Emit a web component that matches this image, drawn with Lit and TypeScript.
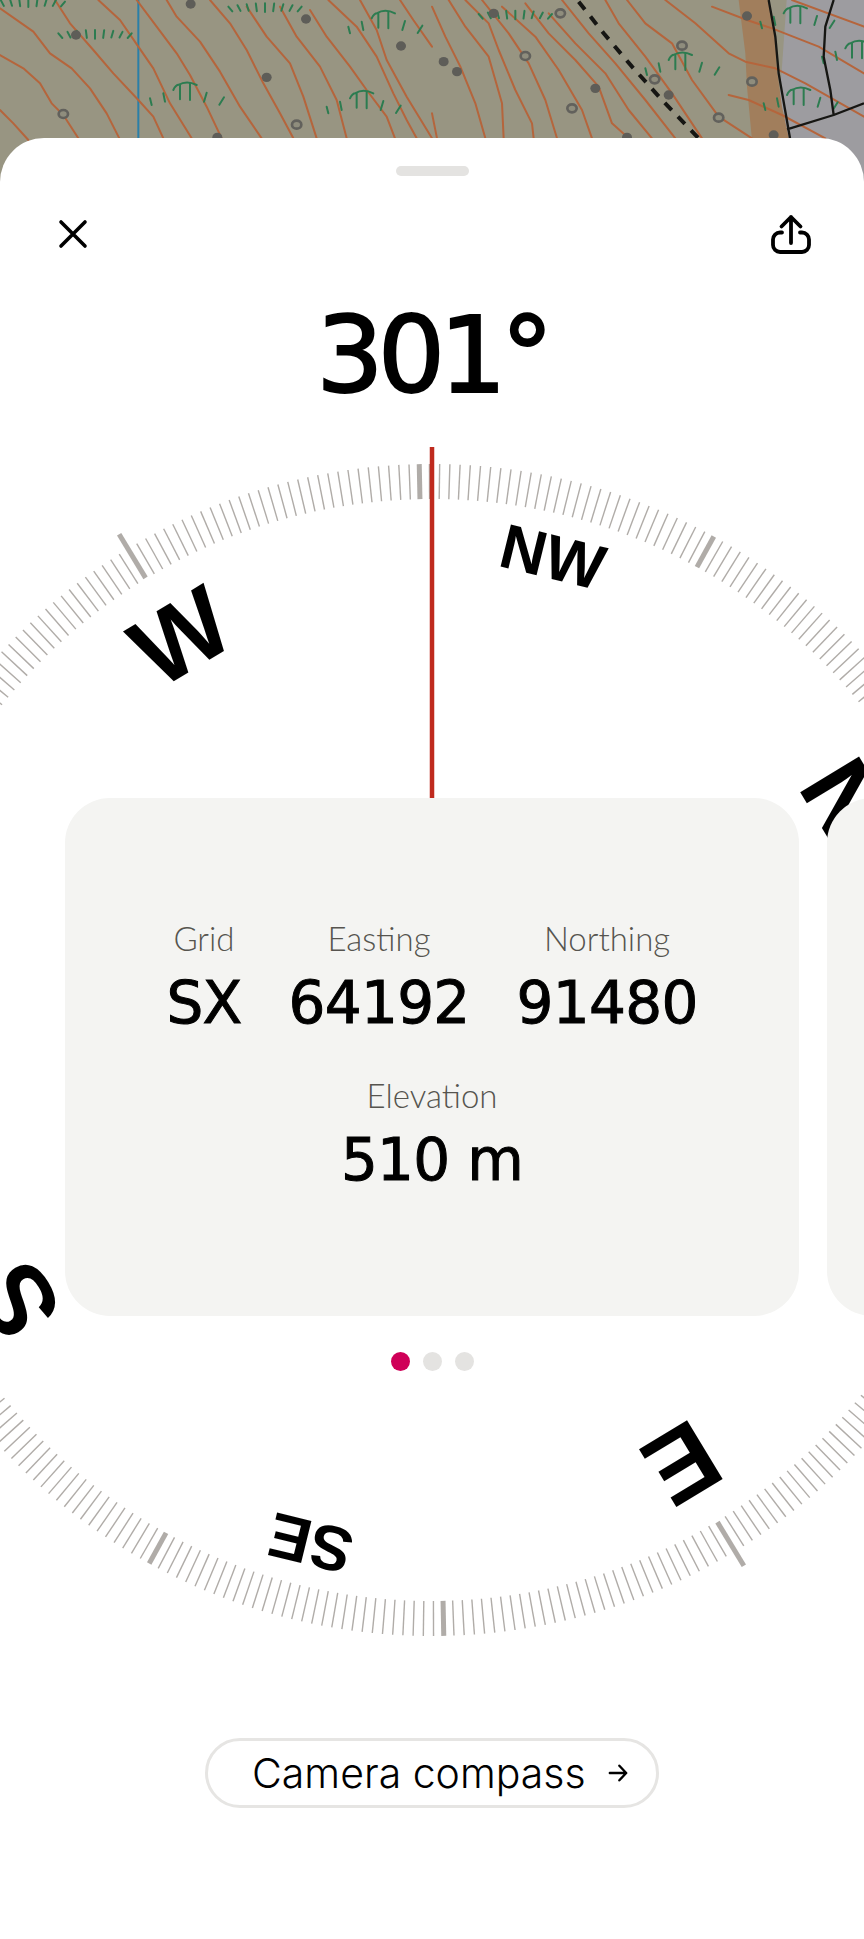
import { LitElement, html, css, svg } from 'lit';
import { customElement } from 'lit/decorators.js';

const HEADING = 301.2;
const CX = 431.5;
const CY = 912; // dial centre, relative to the sheet

// map drawn in 3x coordinates of the 864 wide strip, right half offset by 1296
const CONTOURS_LEFT = [
  '0,25 100,95 150,160 215,205 270,265 320,340 358,415',
  '0,165 70,205 120,250 155,310 190,345 235,415',
  '0,330 40,370 85,420',
  '165,0 210,70 280,150 340,220 415,300 460,350 490,415',
  '295,0 360,60 415,140 460,205 510,310 575,415',
  '410,0 470,80 530,160 570,225 620,320 665,415',
  '500,0 530,50 600,125 660,215 720,320 785,415',
  '630,0 690,70 740,150 790,250 840,340 880,415',
  '740,20 800,110 870,190 910,290 950,415',
  '840,20 890,110 960,200 1010,300 1040,415',
  '930,30 980,110 1050,200 1100,270 1160,350 1185,415',
  '985,0 1070,80 1130,170 1180,280 1220,360 1250,415',
  '1080,0 1130,90 1160,180 1220,290 1296,415',
  '1200,0 1240,60 1296,140',
];
const CONTOURS_RIGHT = [
  '0,340 15,415',
  '0,20 40,110 85,200 130,310 160,415',
  '50,0 100,80 170,170 210,310 215,415',
  '100,0 170,70 200,150 250,270 300,370 305,415',
  '150,0 230,100 290,190 340,300 375,415',
  '210,20 310,110 380,210 450,330 480,415',
  '280,10 350,100 430,180 500,260 540,370 590,415',
  '350,40 430,130 520,220 590,330 660,415',
  '390,0 470,100 550,190 640,300 730,415',
  '520,0 560,70 640,170 720,280 810,415',
  '585,0 640,70 720,130 780,240 860,350 960,415',
  '700,0 790,70 890,160 940,185 1030,205 1120,250 1296,350',
  '840,20 945,60 1020,85 1160,140 1296,220',
  '890,285 950,300 1050,345 1180,415',
  '1080,0 1296,80',
];
const MARKS = [[570, 275], [1100, 300], [1165, 60], [1296 + 760, 185], [1296 + 1105, 45], [1296 + 1115, 290], [1296 + 1290, 150]];
const FANS = [[285, 90], [795, 10], [85, -5], [1296 + 250, 32]];
const DOTS = [[228, 105], [572, 12], [918, 57], [1203, 138], [800, 232], [652, 412], [1296 + 35, 185], [1296 + 75, 215], [1296 + 185, 40], [1296 + 490, 265], [1296 + 710, 285], [1296 + 945, 48], [1296 + 1025, 405], [1296 + 585, 412]];
const RINGS = [[190, 342], [890, 374], [1296 + 280, 168], [1296 + 385, 40], [1296 + 420, 325], [1296 + 668, 238], [1296 + 750, 137], [1296 + 860, 353], [1296 + 960, 245]];

const LABELS: [string, number, boolean][] = [
  ['N', 0, true], ['NE', 45, false], ['E', 90, true], ['SE', 135, false],
  ['S', 180, true], ['SW', 225, false], ['W', 270, true], ['NW', 315, false],
];

function mark(x: number, y: number) {
  return svg`<g transform="translate(${x - 570} ${y - 275})" class="green">
    <path d="M570 250V300M535 255Q560 240 590 255M520 270Q528 252 540 255V298" />
    <path d="M450 295L455 315M490 280L495 305M620 278L612 305M672 292L658 314" />
  </g>`;
}

function fan(x: number, y: number) {
  const ticks = [];
  for (let i = -4; i <= 4; i++) {
    const top = y + ((i * i) / 16) * 10;
    ticks.push(svg`<line x1=${x + i * 26 + i * 1.5} y1=${top} x2=${x + i * 26 - i * 1.5} y2=${top + 26 - Math.abs(i) * 3} />`);
  }
  return svg`<g class="green">${ticks}</g>`;
}

function tick(deg: number) {
  const a = ((deg - HEADING) * Math.PI) / 180;
  const cardinal = deg % 90 === 0;
  const major = deg % 30 === 0;
  const r1 = major && cardinal ? 552 : 551;
  const r2 = cardinal ? 603 : 586;
  const s = Math.sin(a);
  const c = Math.cos(a);
  return svg`<line class=${major ? 'tick major' : 'tick'}
    x1=${CX + r1 * s} y1=${CY - r1 * c} x2=${CX + r2 * s} y2=${CY - r2 * c} />`;
}

@customElement('app-root')
export class AppRoot extends LitElement {
  static styles = css`
    :host {
      display: block;
      position: relative;
      width: 864px;
      height: 1939px;
      overflow: hidden;
      background: #fff;
      font-family: Lato, 'Liberation Sans', sans-serif;
      color: #000;
    }

    .map {
      position: absolute;
      top: 0;
      left: 0;
      width: 864px;
      height: 190px;
      filter: blur(0.5px);
    }
    .map .contour { fill: none; stroke: #b5653c; stroke-width: 6; stroke-linejoin: round; stroke-linecap: round; }
    .map .green { fill: none; stroke: #2c7c50; stroke-width: 6; stroke-linecap: round; }
    .map .dot { fill: #5e5d58; }
    .map .ring { fill: #8f8d7d; stroke: #62615c; stroke-width: 8; }
    .map .border { fill: none; stroke: #161613; stroke-width: 7; stroke-linejoin: round; }

    .sheet {
      position: absolute;
      top: 138px;
      left: 0;
      right: 0;
      bottom: 0;
      background: #fff;
      border-radius: 44px 44px 0 0;
      overflow: hidden;
    }

    .dial {
      position: absolute;
      top: 0;
      left: 0;
      width: 864px;
      height: 1801px;
    }
    .tick { stroke: #b0aca8; stroke-width: 1.4; }
    .tick.major { stroke-width: 5; }
    .needle { stroke: #bf2a1e; stroke-width: 4.5; }
    .dial text {
      font-family: 'Liberation Sans', Arial, sans-serif;
      font-weight: 700;
      text-anchor: middle;
      fill: #000;
    }

    .content {
      position: relative;
      display: flex;
      flex-direction: column;
      align-items: stretch;
    }

    .handle {
      align-self: center;
      width: 73px;
      height: 10px;
      margin-top: 28px;
      border-radius: 5px;
      background: #e4e3e1;
    }

    .header {
      display: flex;
      justify-content: space-between;
      align-items: center;
      height: 40px;
      margin-top: 38px;
      padding: 0 52px 0 58px;
    }
    .header svg { display: block; fill: none; stroke: #000; stroke-linecap: round; stroke-linejoin: round; }

    .bearing {
      height: 126px;
      margin-top: 39px;
      text-align: center;
      font-family: 'DejaVu Sans', sans-serif;
      font-size: 106px;
      line-height: 126px;
      letter-spacing: -6px;
      -webkit-text-stroke: 2px #000;
    }

    .cards {
      display: flex;
      gap: 28px;
      margin-top: 379px;
      padding-left: 65px;
    }
    .card {
      flex: none;
      display: flex;
      flex-direction: column;
      align-items: center;
      justify-content: center;
      gap: 37px;
      width: 734px;
      height: 518px;
      box-sizing: border-box;
      border-radius: 45px;
      background: #f4f4f2;
    }
    .row { display: flex; gap: 47px; }
    .field { display: flex; flex-direction: column; align-items: center; gap: 10px; }
    .field .label { font-size: 33px; font-weight: 300; line-height: 38px; color: #56544f; }
    .field .value {
      font-family: 'DejaVu Sans', sans-serif;
      font-size: 58px;
      line-height: 72px;
      letter-spacing: -0.7px;
      -webkit-text-stroke: 1px #000;
    }

    .dots {
      display: flex;
      justify-content: center;
      gap: 13px;
      margin-top: 36px;
    }
    .dots span { width: 19px; height: 19px; border-radius: 50%; background: #e4e3e1; }
    .dots span.on { background: #cf0058; }

    .pill {
      align-self: center;
      display: flex;
      align-items: center;
      gap: 22px;
      box-sizing: border-box;
      width: 454px;
      height: 70px;
      margin-top: 367px;
      padding-left: 44px;
      border: 3px solid #e6e5e3;
      border-radius: 35px;
      font-family: Inter, sans-serif;
      font-size: 41px;
      font-weight: 300;
      line-height: 60px;
      white-space: nowrap;
    }
    .pill svg { flex: none; fill: none; stroke: #000; stroke-width: 2.6; stroke-linecap: round; stroke-linejoin: round; }
  `;

  private renderMap() {
    return html`<svg class="map" viewBox="0 0 2592 570">
      <rect width="2592" height="570" fill="#989582" />
      <path d="M2320 570L2360 0H2592V570Z" fill="#9d9ca0" />
      <path d="M2216 0H2306L2326 120L2331 210L2346 320L2371 435L2380 570H2270L2241 260L2236 160Z" fill="#a17e5c" />
      <line x1="415" y1="0" x2="415" y2="435" stroke="#2a7fa8" stroke-width="6" />
      ${CONTOURS_LEFT.map((p) => svg`<polyline class="contour" points=${p} />`)}
      <g transform="translate(1296 0)">
        ${CONTOURS_RIGHT.map((p) => svg`<polyline class="contour" points=${p} />`)}
      </g>
      ${MARKS.map(([x, y]) => mark(x, y))}
      ${FANS.map(([x, y]) => fan(x, y))}
      ${DOTS.map(([x, y]) => svg`<ellipse class="dot" cx=${x} cy=${y} rx="15" ry="14" />`)}
      ${RINGS.map(([x, y]) => svg`<ellipse class="ring" cx=${x} cy=${y} rx="14" ry="12" />`)}
      <polyline points="1736,5 1811,100 1896,200 1986,300 2096,415" fill="none" stroke="#161613" stroke-width="12" stroke-dasharray="30 27" />
      <path class="border" d="M2306 0L2326 110L2336 220L2371 420M2501 0L2476 80L2471 170L2491 270L2501 345M2361 388L2501 345L2592 310" />
    </svg>`;
  }

  private renderDial() {
    const ticks = [];
    for (let deg = 0; deg < 360; deg++) ticks.push(tick(deg));
    return html`<svg class="dial" viewBox="0 0 864 1801">
      ${ticks}
      ${LABELS.map(
        ([name, deg, big]) => svg`<text
          transform="rotate(${deg - HEADING} ${CX} ${CY})"
          x=${CX}
          y=${CY - (big ? 449 : 486)}
          font-size=${big ? 100 : 63}>${name}</text>`,
      )}
      <line class="needle" x1="432" y1="309" x2="432" y2="660" />
    </svg>`;
  }

  private field(label: string, value: string) {
    return html`<div class="field">
      <span class="label">${label}</span>
      <span class="value">${value}</span>
    </div>`;
  }

  render() {
    return html`
      ${this.renderMap()}
      <div class="sheet">
        ${this.renderDial()}
        <div class="content">
          <div class="handle"></div>
          <div class="header">
            <svg width="30" height="30" viewBox="0 0 30 30" stroke-width="3.6">
              <path d="M3 3L27 27M27 3L3 27" />
            </svg>
            <svg width="42" height="42" viewBox="0 0 42 42" stroke-width="3.8">
              <path d="M21 4V30M11.5 13.5L21 4L30.5 13.5" />
              <path d="M12 19.5H10A7 7 0 0 0 3 26.5V32A7 7 0 0 0 10 39H32A7 7 0 0 0 39 32V26.5A7 7 0 0 0 32 19.5H30" />
            </svg>
          </div>
          <div class="bearing">301°</div>
          <div class="cards">
            <div class="card">
              <div class="row">
                ${this.field('Grid', 'SX')}
                ${this.field('Easting', '64192')}
                ${this.field('Northing', '91480')}
              </div>
              <div class="row">${this.field('Elevation', '510 m')}</div>
            </div>
            <div class="card"></div>
          </div>
          <div class="dots">
            <span class="on"></span>
            <span></span>
            <span></span>
          </div>
          <div class="pill">
            Camera compass
            <svg width="20" height="20" viewBox="0 0 22 22">
              <path d="M2 11H20M12.5 3L20 11L12.5 19" />
            </svg>
          </div>
        </div>
      </div>
    `;
  }
}
